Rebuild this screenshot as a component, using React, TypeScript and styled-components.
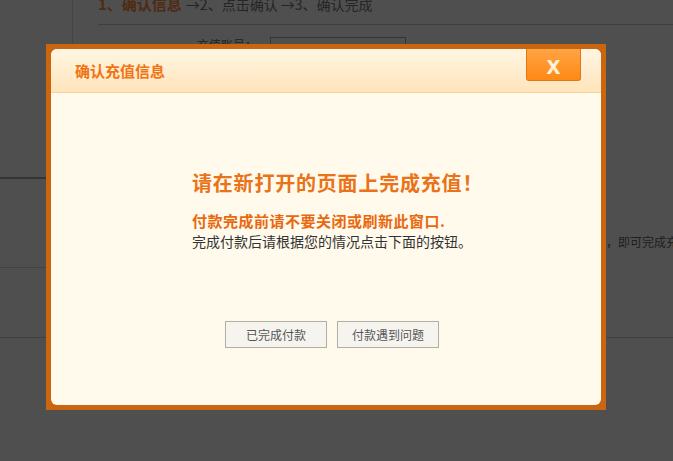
import React from "react";
import styled, { createGlobalStyle } from "styled-components";

const GlobalStyle = createGlobalStyle`
  html, body { margin: 0; padding: 0; }
  body {
    width: 673px;
    height: 461px;
    overflow: hidden;
    background: #ffffff;
    font-family: "Noto Sans CJK SC", "Liberation Sans", sans-serif;
  }
`;

const Page = styled.div`
  width: 673px;
  height: 461px;
  display: flex;
  flex-direction: column;
  overflow: hidden;
`;

const Top = styled.div`
  display: flex;
  height: 337px;
  flex: none;
`;

const Sidebar = styled.aside`
  width: 72px;
  flex: none;
  border-right: 1px solid #dcdcdc;
  display: flex;
  flex-direction: column;
`;

const MenuBlock = styled.div<{ $h?: number; $strong?: boolean }>`
  flex: ${(p) => (p.$h ? "none" : "1")};
  height: ${(p) => (p.$h ? `${p.$h}px` : "auto")};
  border-bottom: ${(p) =>
    p.$h ? (p.$strong ? "2px solid #aaaaaa" : "1px solid #d4d4d4") : "none"};
`;

const Main = styled.main`
  flex: 1;
  min-width: 0;
  padding-left: 25px;
  overflow: hidden;
`;

const Steps = styled.div`
  margin-top: -6px;
  line-height: 20px;
  padding-bottom: 10px;
  border-bottom: 1px solid #c8c8c8;
  white-space: nowrap;
  font-size: 14px;
  color: #777777;
`;

const StepCurrent = styled.span`
  font-size: 15px;
  font-weight: bold;
  color: #ff8a3a;
  margin-right: 4px;
`;

const FormRows = styled.div`
  margin-top: 12px;
  display: flex;
  flex-direction: column;
  gap: 16px;
`;

const FormRow = styled.div<{ $top?: number }>`
  display: flex;
  align-items: flex-start;
  gap: 13px;
  margin-top: ${(p) => p.$top ?? 0}px;
  white-space: nowrap;
`;

const Label = styled.span`
  width: 159px;
  flex: none;
  text-align: right;
  font-size: 12px;
  line-height: 16px;
  color: #666666;
`;

const FieldBox = styled.div`
  width: 136px;
  height: 24px;
  box-sizing: border-box;
  border: 1px solid #a8a8a8;
  padding: 0 20px;
  font-size: 12px;
  line-height: 22px;
  color: #666666;
`;

const TipText = styled.span`
  font-size: 12px;
  line-height: 20px;
  color: #666666;
`;

const Footer = styled.footer`
  flex: 1;
  border-top: 1px solid #d0d0d0;
`;

const Overlay = styled.div`
  position: fixed;
  inset: 0;
  background: rgba(0, 0, 0, 0.69);
`;

const Dialog = styled.div`
  position: fixed;
  left: 46px;
  top: 44px;
  width: 560px;
  height: 366px;
  box-sizing: border-box;
  padding: 5px;
  background: #c9660f;
`;

const Panel = styled.div`
  height: 100%;
  border-radius: 6px;
  background: #fffaeb;
  overflow: hidden;
  display: flex;
  flex-direction: column;
`;

const Header = styled.div`
  flex: none;
  height: 43px;
  border-bottom: 1px solid #f2d39c;
  background: linear-gradient(#fff6e3, #ffe4bb);
  display: flex;
  justify-content: space-between;
  align-items: flex-start;
  padding: 0 20px 0 24px;
`;

const Title = styled.h3`
  margin: 0;
  line-height: 43px;
  font-size: 15px;
  font-weight: bold;
  color: #f07414;
`;

const CloseButton = styled.button`
  width: 55px;
  height: 32px;
  box-sizing: border-box;
  border: 1px solid #e27616;
  border-top: none;
  border-radius: 0 0 3px 3px;
  background: linear-gradient(#ffa443, #ff8916);
  color: #fff3dc;
  font-family: "Liberation Sans", Arial, sans-serif;
  font-weight: bold;
  font-size: 25px;
  line-height: 28px;
  padding: 0;
  text-align: center;
  cursor: pointer;
`;

const Body = styled.div`
  flex: 1;
  padding: 78px 0 0 141px;
`;

const Heading = styled.h2`
  margin: 0 0 16px;
  font-size: 20px;
  line-height: 24px;
  font-weight: bold;
  color: #ea7219;
  letter-spacing: 0.8px;
`;

const Warn = styled.p`
  margin: 0;
  font-size: 15px;
  line-height: 20px;
  font-weight: bold;
  color: #e8690f;
  letter-spacing: 0.5px;
`;

const Note = styled.p`
  margin: 0;
  font-size: 14px;
  line-height: 20px;
  color: #333333;
`;

const Actions = styled.div`
  display: flex;
  gap: 10px;
  margin-top: 70px;
  padding-left: 33px;
`;

const ActionButton = styled.button`
  width: 102px;
  height: 27px;
  box-sizing: border-box;
  border: 1px solid #b3aea4;
  background: #f6f4ef;
  color: #555555;
  font-family: "Noto Sans CJK SC", "Liberation Sans", sans-serif;
  font-size: 12px;
  padding: 0;
  cursor: pointer;
`;

export default function App() {
  return (
    <>
      <GlobalStyle />
      <Page>
        <Top>
          <Sidebar>
            <MenuBlock $h={177} $strong />
            <MenuBlock $h={88} />
            <MenuBlock />
          </Sidebar>
          <Main>
            <Steps>
              <StepCurrent>1、确认信息</StepCurrent>
              →2、点击确认 →3、确认完成
            </Steps>
            <FormRows>
              <FormRow>
                <Label>充值账号：</Label>
                <FieldBox>ak12456</FieldBox>
              </FormRow>
              <FormRow>
                <Label>充值金额：</Label>
                <FieldBox>100</FieldBox>
              </FormRow>
              <FormRow>
                <Label>支付方式：</Label>
                <FieldBox>网上银行</FieldBox>
              </FormRow>
              <FormRow $top={75}>
                <Label>温馨提示：</Label>
                <TipText>
                  完成支付后请回到本页面点击已完成付款按钮系统确认订单状态，即可完成充值。
                </TipText>
              </FormRow>
            </FormRows>
          </Main>
        </Top>
        <Footer />
      </Page>
      <Overlay />
      <Dialog role="dialog">
        <Panel>
          <Header>
            <Title>确认充值信息</Title>
            <CloseButton aria-label="关闭">x</CloseButton>
          </Header>
          <Body>
            <Heading>请在新打开的页面上完成充值！</Heading>
            <Warn>付款完成前请不要关闭或刷新此窗口.</Warn>
            <Note>完成付款后请根据您的情况点击下面的按钮。</Note>
            <Actions>
              <ActionButton>已完成付款</ActionButton>
              <ActionButton>付款遇到问题</ActionButton>
            </Actions>
          </Body>
        </Panel>
      </Dialog>
    </>
  );
}
